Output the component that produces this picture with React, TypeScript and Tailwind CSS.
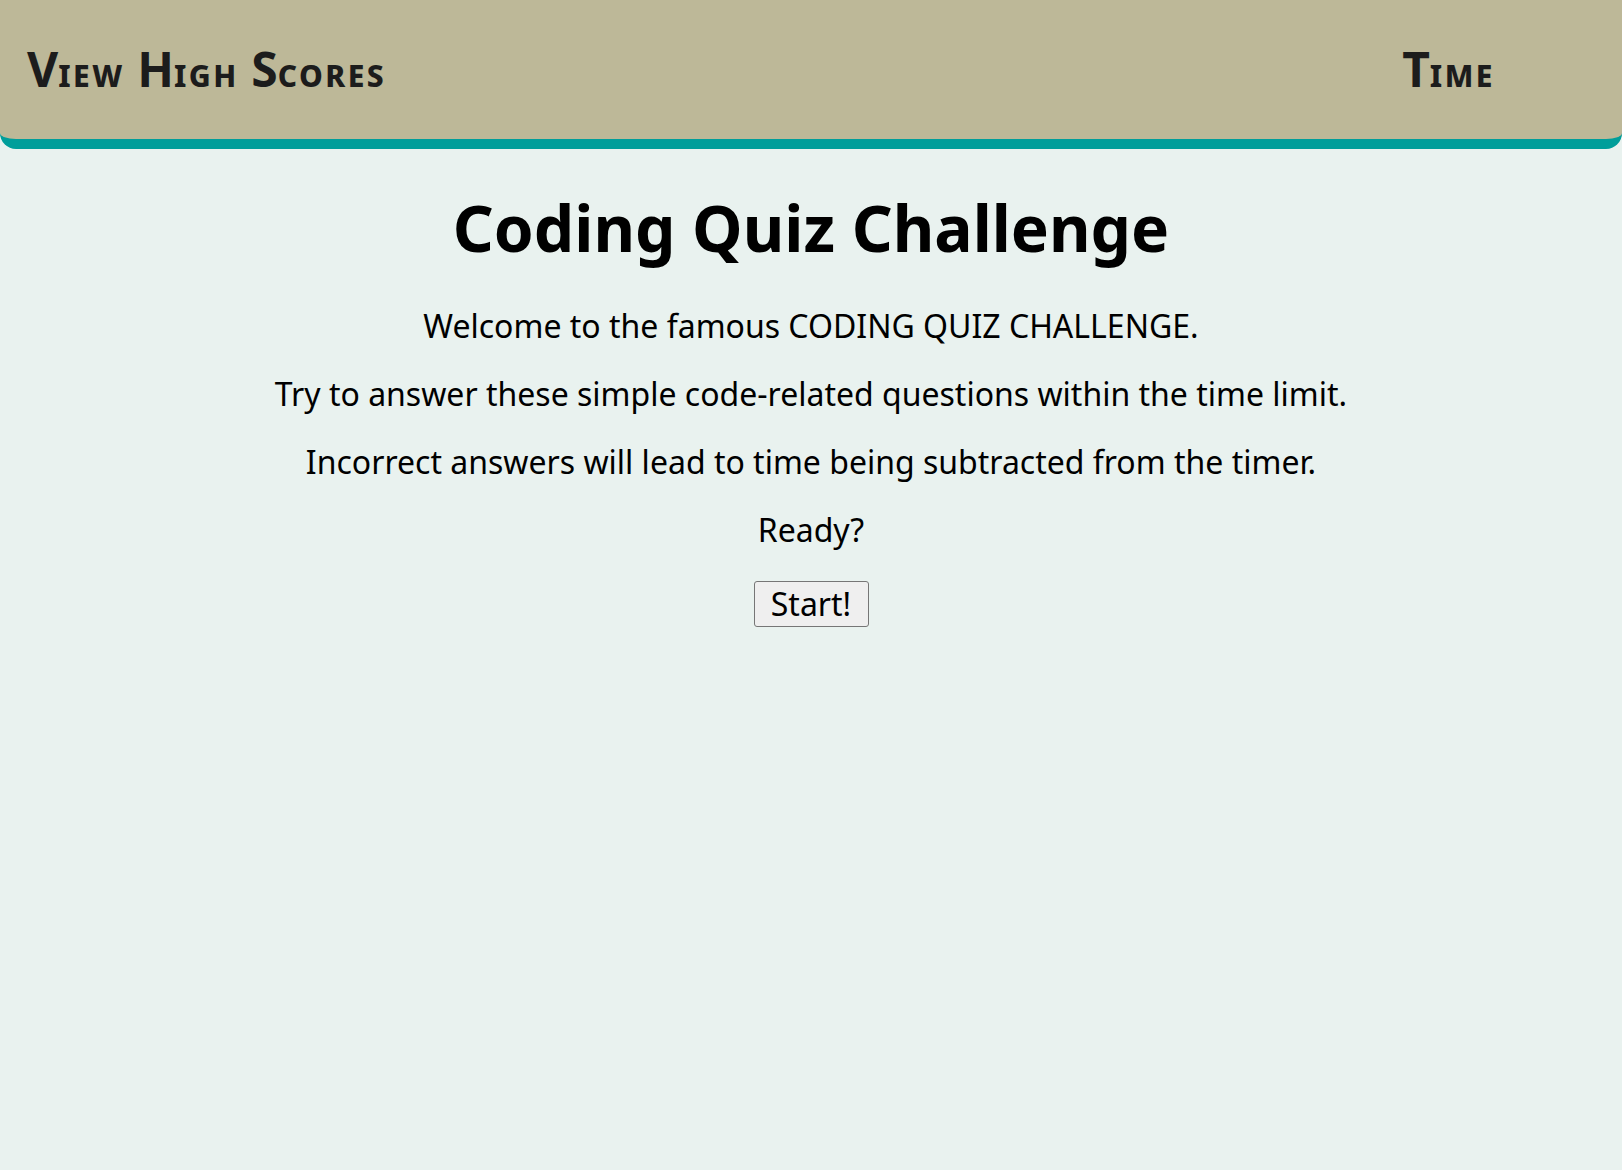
function SmallCaps({ text }: { text: string }) {
	const words = text.split(" ");
	return (
		<>
			{words.map((word, i) => (
				<span key={i}>
					{i > 0 && " "}
					{word[0]}
					<span className="text-[30px] font-extrabold uppercase tracking-[2.5px]">
						{word.slice(1)}
					</span>
				</span>
			))}
		</>
	);
}

export default function App() {
	return (
		<div className="min-h-screen bg-[#e9f2ef] font-['Noto_Sans',sans-serif] text-black">
			<header className="flex h-[149px] items-center justify-between rounded-b-2xl border-b-[10px] border-[#009e9a] bg-[#bdb898] pt-[4px] pl-[27px] pr-[127px] text-[#1c1c1c]">
				<a className="text-[48px] font-bold leading-[65px]">
					<SmallCaps text="View High Scores" />
				</a>
				<span className="text-[48px] font-bold leading-[65px]">
					<SmallCaps text="Time" />
				</span>
			</header>
			<main className="flex flex-col items-center text-center">
				<h1 className="mt-[35px] text-[64px] font-bold leading-[87px]">
					Coding Quiz Challenge
				</h1>
				<div className="mt-[33px] flex flex-col gap-[24px] text-[32px] leading-[44px]">
					<p>Welcome to the famous CODING QUIZ CHALLENGE.</p>
					<p>Try to answer these simple code-related questions within the time limit.</p>
					<p>Incorrect answers will lead to time being subtracted from the timer.</p>
					<p>Ready?</p>
				</div>
				<button
					type="button"
					className="mt-[29px] h-[46px] w-[115px] rounded-[3px] border border-[#767676] bg-[#efefef] text-[32px] leading-[44px]"
				>
					Start!
				</button>
			</main>
		</div>
	);
}
